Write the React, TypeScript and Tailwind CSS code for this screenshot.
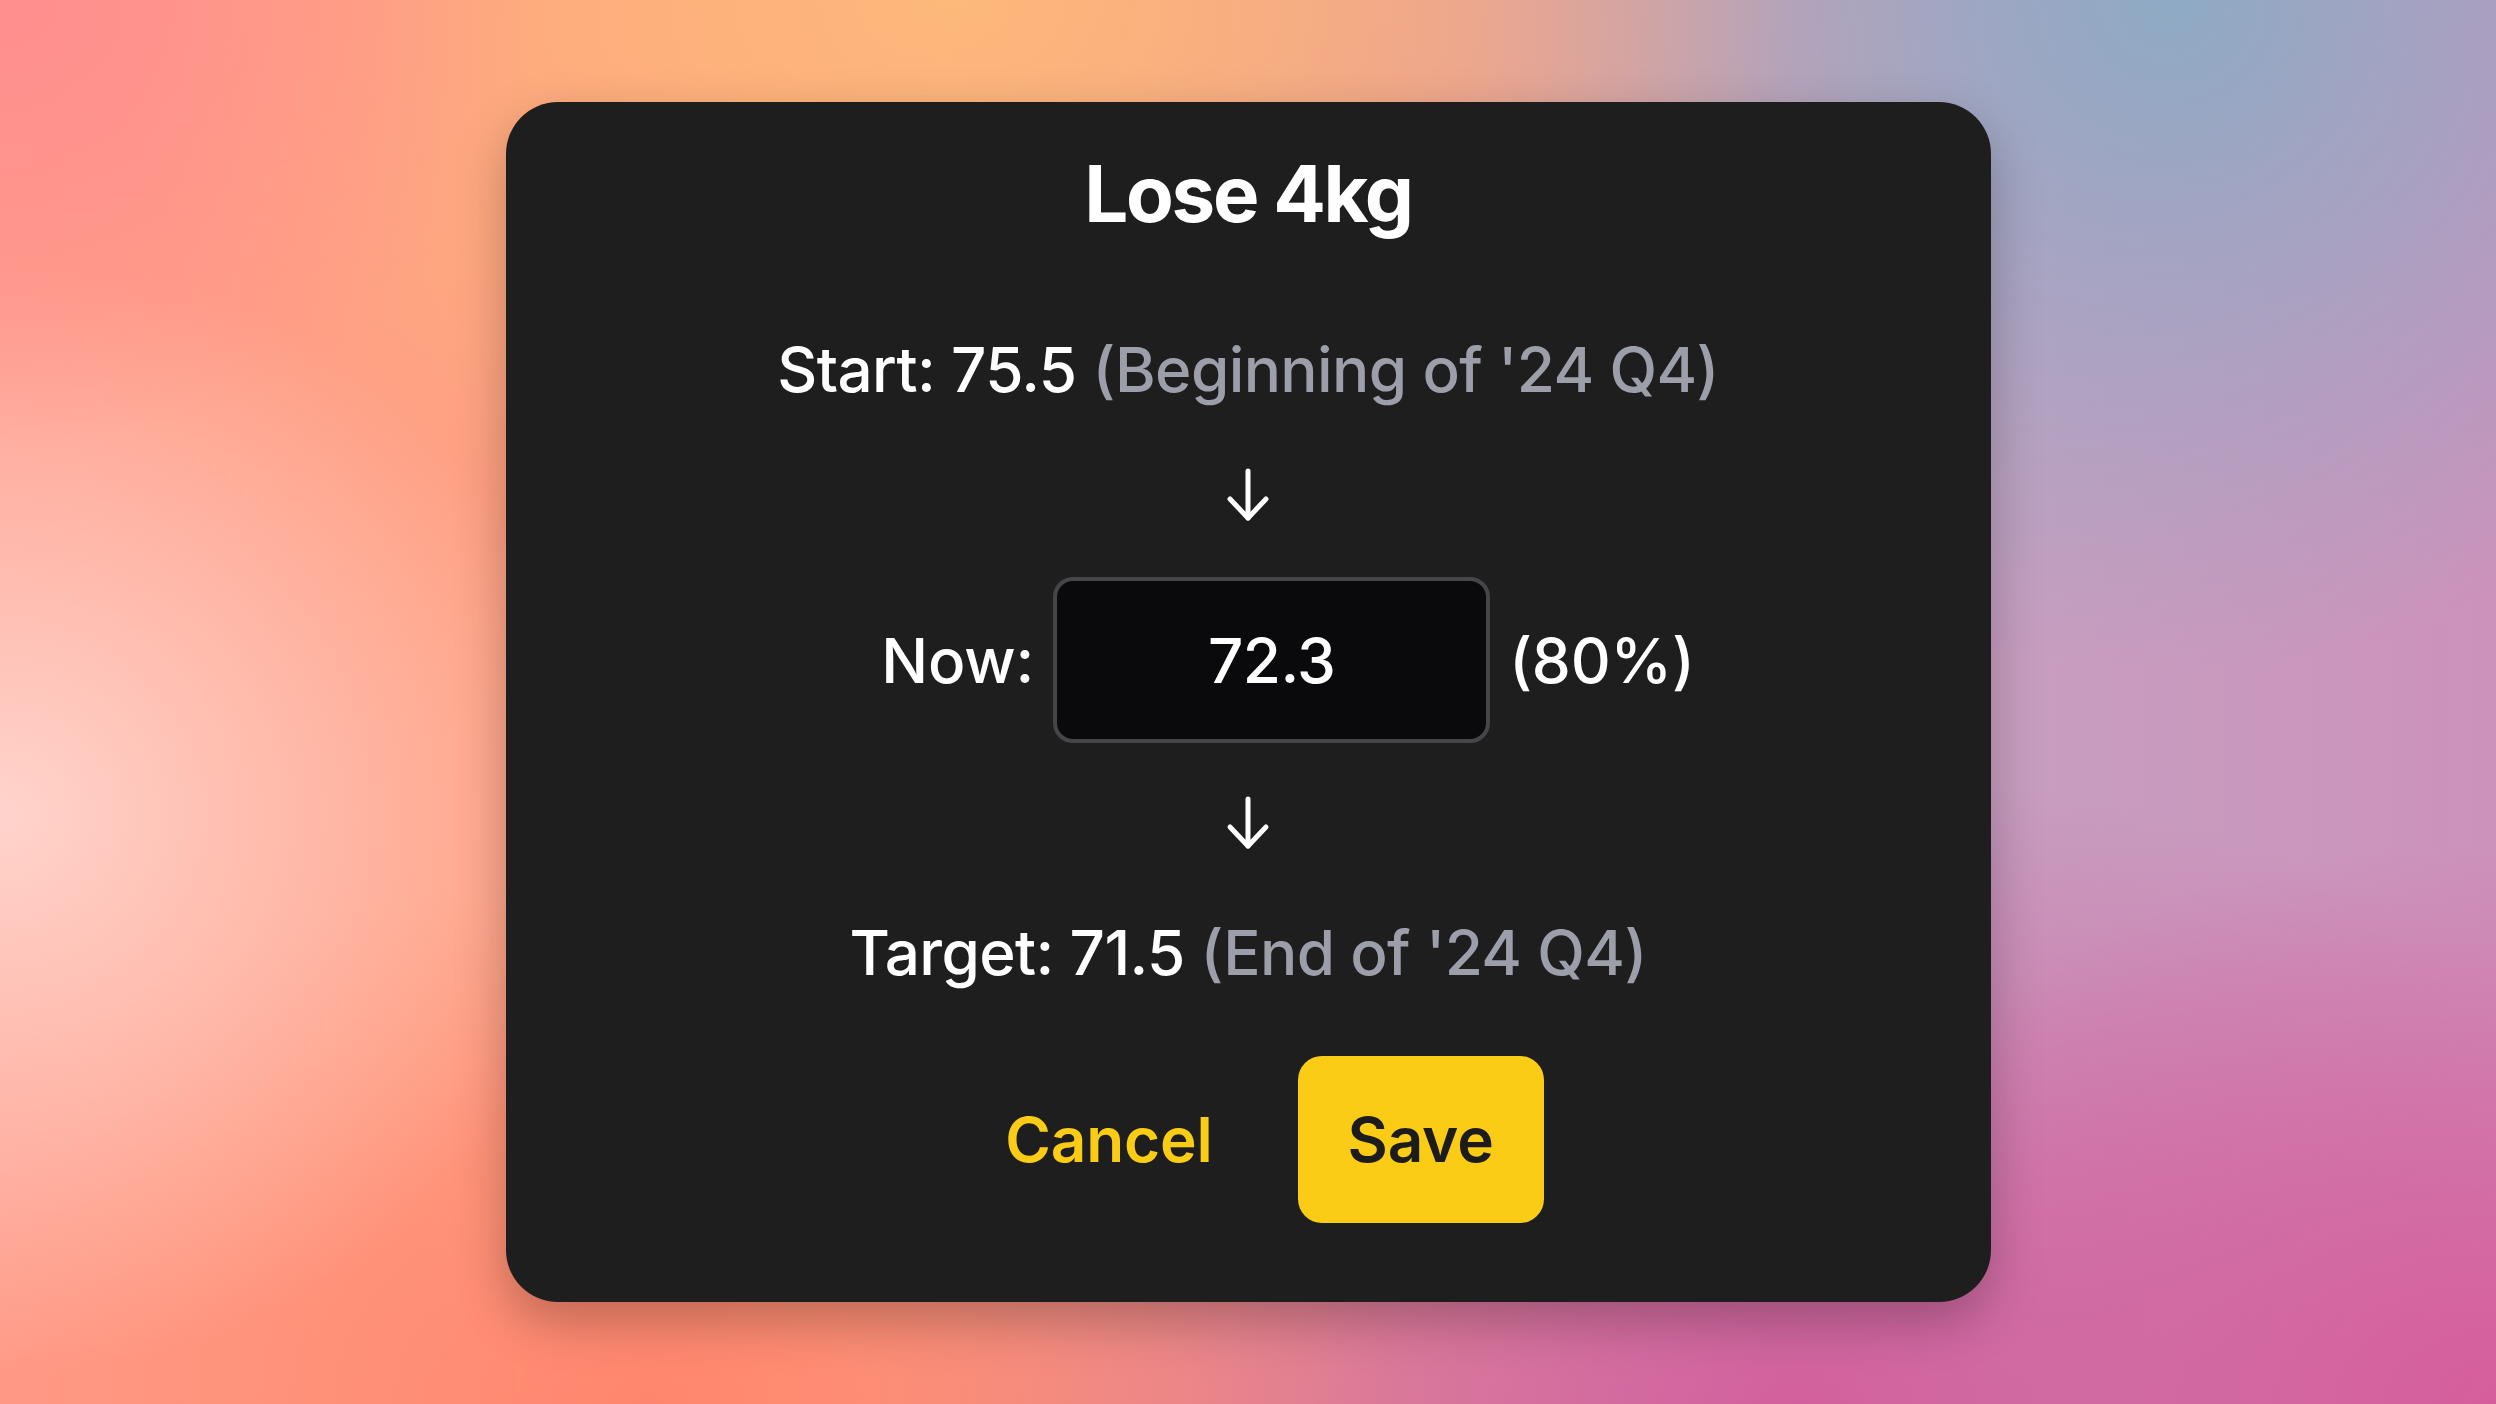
import { useState } from 'react'

function DownArrow() {
  return (
    <svg viewBox="0 0 44 54" className="h-[54px] w-[44px]" fill="none" stroke="white" strokeWidth={5} strokeLinecap="round" strokeLinejoin="round">
      <path d="M22 3v47" />
      <path d="M4 31l18 19 18-19" />
    </svg>
  )
}

export default function App() {
  const [now, setNow] = useState('72.3')

  return (
    <div className="flex min-h-screen justify-center bg-[image:radial-gradient(22%_32%_at_0%_0%,#ff8e8e,transparent),radial-gradient(34%_42%_at_38%_0%,#fdb87a,transparent),radial-gradient(28%_48%_at_87%_0%,#8eaac4,transparent),radial-gradient(24%_40%_at_0%_58%,#ffd4cc,transparent),radial-gradient(30%_38%_at_26%_100%,#ff866e,transparent),radial-gradient(40%_45%_at_72%_100%,#d2609e,transparent),radial-gradient(30%_40%_at_100%_100%,#d85c9c,transparent),linear-gradient(90deg,#ff9c8a_0%,#ffa27e_30%,#e89c92_55%,#c79ec0_80%,#cc92bc_100%)] pt-[102px] font-['Inter',sans-serif]">
      <div className="flex h-[1200px] w-[1485px] flex-col items-center rounded-[52px] bg-[#1e1e1e] pt-[45px] shadow-[0_20px_50px_rgba(0,0,0,0.25)]">
        <h1 className="text-[78px] font-bold leading-[94px] tracking-[-0.03em] text-white">Lose 4kg</h1>

        <p className="mt-[91px] text-[62px] font-medium leading-[75px] tracking-[-0.01em] text-white">
          Start: 75.5 <span className="text-[#9c9fa9]">(Beginning of '24 Q4)</span>
        </p>

        <div className="mt-[61px]">
          <DownArrow />
        </div>

        <div className="mt-[55px] flex items-center gap-[19px] pl-[80px] tracking-[-0.01em]">
          <span className="text-[62px] font-medium leading-[75px] text-white">Now:</span>
          <input
            value={now}
            onChange={(event) => setNow(event.target.value)}
            className="h-[166px] w-[437px] rounded-[20px] border-[4px] border-[#46464a] bg-[#0a0a0d] text-center text-[62px] font-medium tracking-[-0.01em] text-white outline-none"
          />
          <span className="text-[62px] font-medium leading-[75px] text-white">(80%)</span>
        </div>

        <div className="mt-[53px]">
          <DownArrow />
        </div>

        <p className="mt-[65px] text-[62px] font-medium leading-[75px] tracking-[-0.01em] text-white">
          Target: 71.5 <span className="text-[#9c9fa9]">(End of '24 Q4)</span>
        </p>

        <div className="mt-[66px] flex items-center gap-[32px] tracking-[-0.01em]">
          <button type="button" className="h-[167px] rounded-[24px] px-[53px] text-[62px] font-semibold text-[#facc15]">
            Cancel
          </button>
          <button type="button" className="h-[167px] rounded-[24px] bg-[#facc15] px-[50px] text-[62px] font-semibold text-[#1c1c1c]">
            Save
          </button>
        </div>
      </div>
    </div>
  )
}
